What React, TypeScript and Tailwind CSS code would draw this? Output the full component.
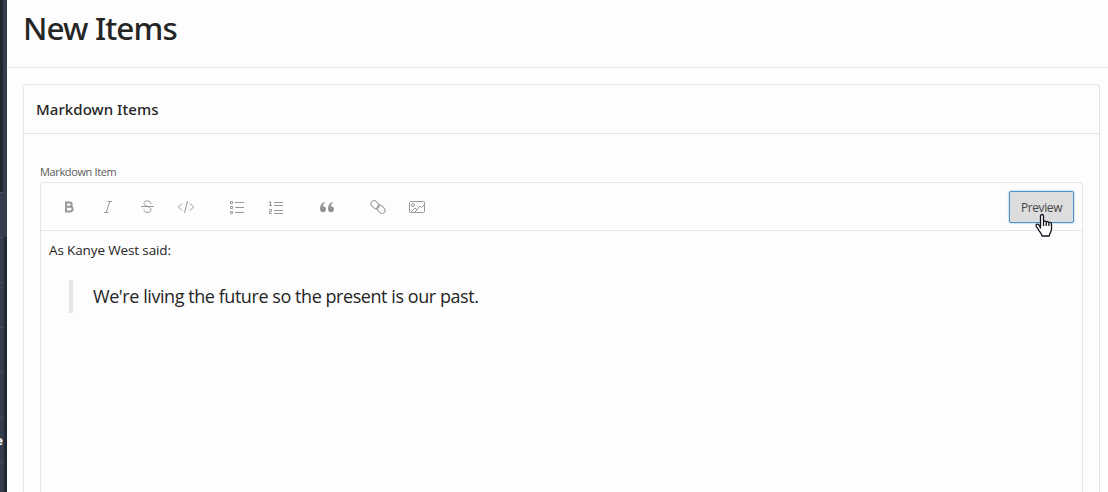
import React from "react";

const separators = [0, 1, 2, 3, 4, 5];

function Tool({ children, className }: { children: React.ReactNode; className: string }) {
  return (
    <button className={`flex h-6 w-[39px] shrink-0 items-center justify-center ${className}`}>
      <svg width="20" height="20" viewBox="0 0 20 20" fill="none" stroke="#999999" strokeWidth="1">
        {children}
      </svg>
    </button>
  );
}

function Sidebar() {
  return (
    <aside className="flex h-full w-[7px] shrink-0 flex-col overflow-hidden bg-[#343d4b]">
      <div className="h-[192px] w-[3px] shrink-0 bg-[#22262e]" />
      <div className="h-[45px] shrink-0">
        <div className="h-px w-[3px] bg-[#48505d]" />
      </div>
      <div className="flex flex-1 bg-[#1f2933]">
        <div className="w-1 bg-[#343d4b]">
          {separators.map((i) => (
            <div key={i} className="flex h-[45px] w-[3px] items-center justify-end overflow-hidden border-t border-[#464e5b] pt-0.5 text-[13px] font-bold text-white">
              {i === 4 && <span className="whitespace-nowrap">e</span>}
            </div>
          ))}
        </div>
      </div>
    </aside>
  );
}

export default function App() {
  return (
    <div className="relative flex h-[492px] w-[1108px] overflow-hidden bg-[#fdfdfd] font-['Open_Sans','Noto_Sans',sans-serif] text-[#252525]">
      <Sidebar />
      <main className="flex min-w-0 flex-1 flex-col">
        <header className="h-[68px] shrink-0 border-b border-[#e5e5e5] pl-4">
          <h1 className="pt-[6px] font-['Noto_Sans',sans-serif] text-[31.5px] leading-[44px] font-medium tracking-[-0.9px]">
            <span>New Items</span>
          </h1>
        </header>
        <section className="mt-4 mr-2 ml-4 flex h-[420px] shrink-0 flex-col rounded-t-sm border border-b-0 border-[#e5e5e5]">
          <h2 className="h-[49px] shrink-0 border-b border-[#e5e5e5] pl-3 font-['Noto_Sans',sans-serif] text-[15px] leading-[49px] font-medium tracking-[0.05px]">
            <span>Markdown Items</span>
          </h2>
          <div className="flex flex-1 flex-col pt-[30px] pr-4 pl-4">
            <label className="h-[18px] text-[11px] leading-[15px] tracking-[-0.37px] text-[#5c5c5c]">
              <span>Markdown Item</span>
            </label>
            <div className="flex-1 rounded-t-sm border border-b-0 border-[#e5e5e5]">
              <div className="flex h-12 items-center border-b border-[#e5e5e5] pr-2 pl-2">
                <Tool className="">
                  <path d="M6 5.5h4.500c3 0 3 4.200 0 4.200H6m0 0h5c3.500 0 3.500 4.800 0 4.800H6m1-9v9" strokeWidth="2" />
                </Tool>
                <Tool className="">
                  <path d="M9.5 4.5H14M6 15.5h4.5M11.8 4.5l-3.6 11" />
                </Tool>
                <Tool className="">
                  <path d="M4 9.5h13M14 7c0-4-7-4-7-.5 0 3 7 2.500 7 6.300 0 3.700-7 3.500-7-.3" />
                </Tool>
                <Tool className="">
                  <path d="M6 6.5 2.5 10 6 13.5M14 6.5l3.5 3.5-3.5 3.5M11.5 4l-3 12" />
                </Tool>
                <Tool className="ml-3">
                  <path d="M8 5.5h9M8 10.5h9M8 15.5h9" strokeWidth="1.2" />
                  <path d="M3.5 4.5h2v2h-2zM3.5 9.5h2v2h-2zM3.5 14.5h2v2h-2z" />
                </Tool>
                <Tool className="">
                  <path d="M8 5.5h9M8 8.5h9M8 13.5h9M8 16.5h9" strokeWidth="1.2" />
                  <path d="m3 5.5 1.5-1v4M3 8.5h3M3 12.5h2.5v2H3.5v2H6" />
                </Tool>
                <Tool className="ml-3">
                  <path d="M7.500 5C4.500 6 3 8 3 12c0 4.500 6 4.300 6 .200 0-2.200-1.700-3.200-3.200-3C6 7.500 6.500 6.500 8 5.700zM15.500 5c-3 1-4.500 3-4.500 7 0 4.500 6 4.300 6 .200 0-2.200-1.700-3.200-3.200-3 .200-1.700.700-2.700 2.200-3.500z" fill="#929292" stroke="none" />
                </Tool>
                <Tool className="ml-3">
                  <rect x="2.500" y="4.700" width="9" height="6" rx="3" transform="rotate(45 7 7.700)" />
                  <rect x="8.500" y="9.300" width="9" height="6" rx="3" transform="rotate(45 13 12.300)" />
                </Tool>
                <Tool className="">
                  <rect x="2.500" y="4.500" width="15" height="11" rx="1" />
                  <circle cx="6" cy="8" r="1.500" />
                  <path d="m4 15 4-4 2 2M8 15l5-6 1.500 1.500L17 8" />
                </Tool>
                <button className="ml-auto h-8 w-[65px] rounded-[2px] border border-[#4f91c9] bg-[#dddddd] text-center text-[12px] leading-[30px] tracking-[-0.4px] text-[#464646] shadow-[0_0_2px_#75add8]">
                  <span className="block pt-px">Preview</span>
                </button>
              </div>
              <article className="px-2 pt-[7px]">
                <p className="text-[13.5px] leading-6 tracking-[-0.13px]"><span>As Kanye West said:</span></p>
                <blockquote className="mt-[18px] ml-5 h-[33px] border-l-4 border-[#e5e5e5] pl-5 text-[18px] leading-[33px] tracking-[-0.44px]">
                  <span>We're living the future so the present is our past.</span>
                </blockquote>
              </article>
            </div>
          </div>
        </section>
      </main>
      <svg className="pointer-events-none absolute top-[213px] left-[1034px]" width="20" height="26" viewBox="0 0 20 26" fill="white" stroke="#151520" strokeWidth="1.3" strokeLinejoin="round">
        <path d="M6.500 15V3c0-2 3-2 3 0v6c0-1.500 2.700-1.500 2.700.500 0-1.500 2.700-1.300 2.700.700 0-1.300 2.600-1 2.600.800v5c0 3-2 4-2.300 7H8c-.500-3-2.500-4-4-7-1-2-2-2-2-3.500 0-1.800 2-1.700 3-.500zM9.500 9v4M12.200 9.500V13M14.900 10.200V13" />
      </svg>
    </div>
  );
}
